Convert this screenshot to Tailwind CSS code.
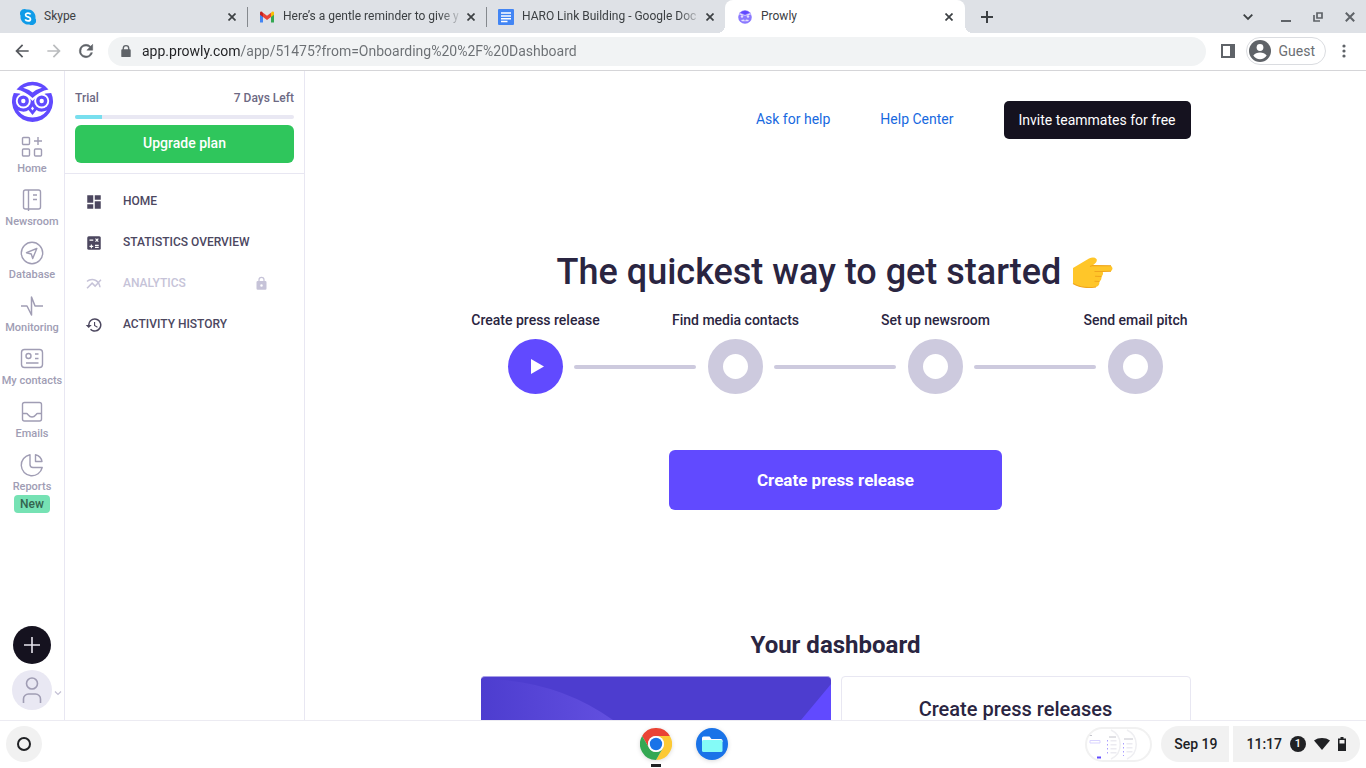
<!DOCTYPE html>
<html lang="en">
<head>
    <meta charset="UTF-8">
    <meta name="viewport" content="width=device-width, initial-scale=1.0">
    <title>Prowly</title>
    <script src="https://cdn.jsdelivr.net/npm/@tailwindcss/browser@4"></script>
</head>
<body class="h-screen flex flex-col overflow-hidden bg-white font-['Roboto',sans-serif] text-[#2a2541]">

    <!-- Tab strip -->
    <header class="shrink-0">
        <div class="flex h-[33px] items-stretch bg-[#dee1e6] pl-2 text-xs text-[#3c4043]">
            <div class="flex w-[239px] items-center gap-2 pl-3 pr-[7px]">
                <svg class="size-4 shrink-0" viewBox="0 0 16 16"><path d="M4.5 0A4.5 4.5 0 0 0 .6 6.8 7.5 7.5 0 0 0 9.2 15.4 4.5 4.5 0 0 0 15.4 9.2 7.5 7.5 0 0 0 6.8.6 4.5 4.5 0 0 0 4.5 0z" fill="#0f9be8"/><path d="M10.600 5.400C10 4.400 9.200 4.100 8 4.100 6.600 4.100 5.600 4.800 5.600 5.900 5.600 8.500 10.500 7.300 10.500 9.900 10.500 11.200 9.400 11.900 8 11.900 6.600 11.900 5.700 11.400 5.200 10.300" fill="none" stroke="#fff" stroke-width="1.700"/></svg>
                <button class="-mr-2 flex-1 whitespace-nowrap pb-[2px] text-left">Skype</button>
                <button class="grid size-4 place-items-center" aria-label="Close Skype"><svg class="size-2" viewBox="0 0 8 8"><path d="M.5.5l7 7m0-7l-7 7" stroke="currentColor" stroke-width="1.700"/></svg></button>
            </div>
            <div class="flex w-[239px] items-center gap-2 pl-3 pr-[7px] relative before:absolute before:left-0 before:h-5 before:w-px before:bg-[#85898e]">
                <svg class="size-4 shrink-0" viewBox="0 0 16 16"><path d="M1 4v9.500h3V7z" fill="#4285f4"/><path d="M12 7v6.500h3V4z" fill="#34a853"/><path d="M12 3.800V8l3-2.300V4c0-1.700-1.700-2.100-3-.2z" fill="#fbbc04"/><path d="M4 3.800l4 3 4-3V8l-4 3-4-3z" fill="#ea4335"/><path d="M1 4v1.700L4 8V3.800C2.700 1.900 1 2.300 1 4z" fill="#c5221f"/></svg>
                <button class="-mr-2 flex-1 whitespace-nowrap pb-[2px] text-left [mask-image:linear-gradient(to_right,#000_87%,transparent)]">Here’s a gentle reminder to give y</button>
                <button class="grid size-4 place-items-center" aria-label="Close Gmail"><svg class="size-2" viewBox="0 0 8 8"><path d="M.5.5l7 7m0-7l-7 7" stroke="currentColor" stroke-width="1.700"/></svg></button>
            </div>
            <div class="flex w-[239px] items-center gap-2 pl-3 pr-[7px] relative before:absolute before:left-0 before:h-5 before:w-px before:bg-[#85898e]">
                <svg class="size-4 shrink-0" viewBox="0 0 16 16"><rect width="16" height="16" rx="1" fill="#4285f4"/><path d="M3 4h10M3 7h10M3 9.800h10M3 12.500h6.500" stroke="#fff" stroke-width="1.500"/></svg>
                <button class="-mr-2 flex-1 whitespace-nowrap pb-[2px] text-left [mask-image:linear-gradient(to_right,#000_87%,transparent)]">HARO Link Building - Google Doc</button>
                <button class="grid size-4 place-items-center" aria-label="Close Google Docs"><svg class="size-2" viewBox="0 0 8 8"><path d="M.5.5l7 7m0-7l-7 7" stroke="currentColor" stroke-width="1.700"/></svg></button>
            </div>
            <div class="relative flex w-[240px] items-center gap-2 rounded-t-lg bg-white pl-3 pr-2 before:absolute before:-left-2 before:bottom-0 before:size-2 before:bg-[radial-gradient(circle_at_0_0,transparent_8px,#fff_8px)] after:absolute after:-right-2 after:bottom-0 after:size-2 after:bg-[radial-gradient(circle_at_100%_0,transparent_8px,#fff_8px)]">
                <svg class="size-4 shrink-0" viewBox="0 0 16 16"><circle cx="8" cy="8" r="6.800" fill="#8b79ff"/><path d="M3.500 3.500Q8 0 12.500 3.500L8 5.500z" fill="#614aff"/><g fill="#e4dfff"><circle cx="5" cy="7.500" r="1.200"/><circle cx="11" cy="7.500" r="1.200"/><path d="M4 11l3-.5 1 1.500 1-1.500 3 .5-1 1.200H5z"/><path d="M2 5.500l1-1.200 5 2 5-2 1 1.200-6 1.300z"/></g></svg>
                <button class="-mr-2 flex-1 whitespace-nowrap pb-[2px] text-left">Prowly</button>
                <button class="grid size-4 place-items-center" aria-label="Close Prowly"><svg class="size-2" viewBox="0 0 8 8"><path d="M.5.5l7 7m0-7l-7 7" stroke="currentColor" stroke-width="1.700"/></svg></button>
            </div>
            <button class="grid w-11 place-items-center" aria-label="New tab"><svg class="size-3" viewBox="0 0 12 12"><path d="M6 0v12M0 6h12" stroke="currentColor" stroke-width="2"/></svg></button>
            <div class="ml-auto flex items-center gap-4 pr-2 text-[#5f6368]">
                <button class="mr-[6px] grid size-4 place-items-center" aria-label="Search tabs"><svg class="size-[10px]" viewBox="0 0 10 10"><path d="M.7 2.700L5 7l4.300-4.300" fill="none" stroke="#3c4043" stroke-width="1.800"/></svg></button>
                <button class="grid size-4 place-items-center" aria-label="Minimize"><svg class="size-3" viewBox="0 0 12 12"><path d="M1 10h10" stroke="currentColor" stroke-width="2"/></svg></button>
                <button class="grid size-4 place-items-center" aria-label="Restore"><svg class="size-[10px]" viewBox="0 0 10 10"><path d="M4 1h5v5H4zM1 3v6h6" fill="none" stroke="currentColor" stroke-width="1.700"/></svg></button>
                <button class="grid size-4 place-items-center" aria-label="Close window"><svg class="size-[10px]" viewBox="0 0 10 10"><path d="M.8.8l8.400 8.400m0-8.400L.8 9.200" stroke="currentColor" stroke-width="2"/></svg></button>
            </div>
        </div>

        <!-- Toolbar -->
        <div class="flex h-[38px] items-center border-b border-[#d5d5d8] px-3 pb-px text-[#5f6368]">
            <button class="mr-3 grid size-5 place-items-center text-[#55585d]" aria-label="Back"><svg class="size-5" viewBox="0 0 24 24" fill="currentColor"><path d="M20 11H7.830l5.590-5.590L12 4l-8 8 8 8 1.410-1.410L7.830 13H20v-2z"/></svg></button>
            <button class="mr-3 grid size-5 place-items-center text-[#babcbe]" aria-label="Forward"><svg class="size-5" viewBox="0 0 24 24" fill="currentColor"><path d="M12 4l-1.410 1.410L16.170 11H4v2h12.170l-5.580 5.590L12 20l8-8z"/></svg></button>
            <button class="mr-3 grid size-5 place-items-center" aria-label="Reload"><svg class="size-5" viewBox="0 0 24 24" fill="currentColor"><path d="M17.650 6.350A7.960 7.960 0 0 0 12 4a8 8 0 1 0 7.730 10h-2.080A6 6 0 1 1 12 6c1.660 0 3.140.69 4.220 1.780L13 11h7V4l-2.350 2.350z" stroke="currentColor" stroke-width=".6"/></svg></button>
            <label class="flex h-[29px] flex-1 items-center gap-[10px] rounded-full bg-[#f1f3f4] pl-3 pr-4">
                <svg class="size-3" viewBox="0 0 12 14" fill="#5f6368"><path d="M2 5V4a4 4 0 0 1 8 0v1h.5a1 1 0 0 1 1 1v7a1 1 0 0 1-1 1h-9a1 1 0 0 1-1-1V6a1 1 0 0 1 1-1zm1.600 0h4.800V4a2.400 2.400 0 0 0-4.800 0z"/></svg>
                <input class="min-w-0 flex-1 bg-[linear-gradient(to_right,#202124_99px,#6b6f73_99px)] bg-clip-text text-sm text-transparent outline-none" aria-label="Address" value="app.prowly.com/app/51475?from=Onboarding%20%2F%20Dashboard">
            </label>
            <button class="ml-3 mr-2 grid size-5 place-items-center" aria-label="Side panel"><svg class="size-[14px]" viewBox="0 0 14 14"><path d="M1 1h12v12H1z" fill="none" stroke="currentColor" stroke-width="2"/><path d="M9 0h5v14H9z" fill="currentColor"/></svg></button>
            <button class="flex h-7 items-center gap-2 rounded-full border border-[#dadce0] pl-[2px] pr-[10px] text-sm text-[#6b6f73]">
                <svg class="size-[22px]" viewBox="0 0 22 22"><circle cx="11" cy="11" r="11" fill="#5f6368"/><circle cx="11" cy="7.500" r="3.400" fill="#fff"/><path d="M4.300 15.500c1.400-2 4-3.100 6.700-3.100s5.300 1.100 6.700 3.100a8 8 0 0 1-13.400 0z" fill="#fff"/></svg>
                Guest
            </button>
            <button class="ml-2 grid size-5 place-items-center" aria-label="Menu"><svg class="h-[14px] w-1" viewBox="0 0 4 14" fill="currentColor"><circle cx="2" cy="2" r="1.600"/><circle cx="2" cy="7" r="1.600"/><circle cx="2" cy="12" r="1.600"/></svg></button>
        </div>
    </header>

    <div class="flex min-h-0 flex-1">
        <!-- Icon rail -->
        <nav class="flex w-[65px] shrink-0 flex-col items-center border-r border-[#e8e7f2] pt-[10px] text-[11px]/4 font-medium text-[#a09db4]">
            <a href="#" aria-label="Prowly" class="mb-[13px]">
                <svg class="size-[41px]" viewBox="0 0 41 41">
                    <path d="M4.500 8.500A20.500 20.500 0 0 1 36.500 8.500C31 9.500 25 12.500 20.500 17C16 12.500 10 9.500 4.500 8.500z" fill="#614aff"/>
                    <path d="M11 6.800Q20.500 1.800 30 6.800Q24 8.500 20.500 11.500Q17 8.500 11 6.800z" fill="#fff"/>
                    <path d="M1.800 12A20.500 20.500 0 1 0 39.200 12Q28 12 20.500 20Q13 12 1.800 12z" fill="#614aff"/>
                    <circle cx="11.300" cy="20" r="7.500" fill="#fff"/><circle cx="29.700" cy="20" r="7.500" fill="#fff"/>
                    <circle cx="11.300" cy="20" r="5.600" fill="#614aff"/><circle cx="29.700" cy="20" r="5.600" fill="#614aff"/>
                    <circle cx="11.300" cy="20" r="2.200" fill="#fff"/><circle cx="29.700" cy="20" r="2.200" fill="#fff"/>
                    <path d="M6 29.500Q13 32 16.500 29L20.500 34L24.500 29Q28 32 35 29.500Q29.500 36.500 20.500 36.500Q11.500 36.500 6 29.500z" fill="#fff"/>
                    <path d="M20.500 25.500l1.500 2-1.500 2-1.500-2z" fill="#fff"/>
                </svg>
            </a>
            <a href="#" class="flex h-[53px] flex-col items-center gap-[2px]">
                <svg class="size-6" viewBox="0 0 24 24" fill="none" stroke="currentColor" stroke-width="1.400"><rect x="2.500" y="2.500" width="7" height="7" rx="1"/><rect x="2.500" y="14" width="7" height="7" rx="1"/><rect x="14.500" y="14" width="7" height="7" rx="1"/><path d="M18 2v8M14 6h8"/></svg>
                Home
            </a>
            <a href="#" class="flex h-[53px] flex-col items-center gap-[2px]">
                <svg class="size-6" viewBox="0 0 24 24" fill="none" stroke="currentColor" stroke-width="1.400"><rect x="3.500" y="2" width="17" height="19" rx="2"/><path d="M8.500 2v21M13 7h4M13 11.500h4"/></svg>
                Newsroom
            </a>
            <a href="#" class="flex h-[53px] flex-col items-center gap-[2px]">
                <svg class="size-6" viewBox="0 0 24 24" fill="none" stroke="currentColor" stroke-width="1.400" stroke-linejoin="round"><circle cx="12" cy="12" r="10.700"/><path d="M16.800 7.500L6.500 11.700l4.800 1.300 1.400 4.500z"/></svg>
                Database
            </a>
            <a href="#" class="flex h-[53px] flex-col items-center gap-[2px]">
                <svg class="size-6" viewBox="0 0 24 24" fill="none" stroke="currentColor" stroke-width="1.500" stroke-linejoin="round"><path d="M1 12h6l4.500 9V3l3.500 9h8"/></svg>
                Monitoring
            </a>
            <a href="#" class="flex h-[53px] flex-col items-center gap-[2px] whitespace-nowrap">
                <svg class="size-6" viewBox="0 0 24 24" fill="none" stroke="currentColor" stroke-width="1.400"><rect x="1.500" y="2.500" width="21" height="18" rx="3"/><circle cx="8.500" cy="9" r="2.500"/><path d="M15 7h3.500M15 11.500h3.500M6 16h12.500"/></svg>
                My contacts
            </a>
            <a href="#" class="flex h-[53px] flex-col items-center gap-[2px]">
                <svg class="size-6" viewBox="0 0 24 24" fill="none" stroke="currentColor" stroke-width="1.400"><rect x="2.500" y="2.500" width="19" height="18.500" rx="2"/><path d="M2.500 13.500h4c1.500 0 2 3.500 5.500 3.500s4-3.500 5.500-3.500h4"/></svg>
                Emails
            </a>
            <a href="#" class="flex flex-col items-center gap-[2px]">
                <svg class="size-6" viewBox="0 0 24 24" fill="none" stroke="currentColor" stroke-width="1.400" stroke-linejoin="round"><path d="M10 1.700A10.600 10.600 0 1 0 22.200 14.500H13a3 3 0 0 1-3-3z"/><path d="M15.500 1.700v6.800H22A8.500 8.500 0 0 0 15.500 1.700z"/></svg>
                Reports
            </a>
            <span class="rounded bg-[#76e2b4] px-[6px] py-px text-xs text-[#34644f]">New</span>
            <button class="mt-auto grid size-[38px] place-items-center rounded-full bg-[#15121f]" aria-label="Create"><svg class="size-4" viewBox="0 0 16 16"><path d="M8 0v16M0 8h16" stroke="#e6e5ee" stroke-width="1.600"/></svg></button>
            <button class="mb-[10px] mt-[6px] flex items-center gap-[2px] self-start pl-3" aria-label="Account">
                <span class="grid size-10 place-items-center rounded-full bg-[#e9e8f3]"><svg class="h-[26px] w-5" viewBox="0 0 20 26" fill="none" stroke="currentColor" stroke-width="1.600"><circle cx="10" cy="6.500" r="5.500"/><path d="M1.500 26v-4a5 5 0 0 1 5-5h7a5 5 0 0 1 5 5v4"/></svg></span>
                <svg class="mt-[6px] size-2" viewBox="0 0 8 8"><path d="M1 2.500l3 3 3-3" fill="none" stroke="#c3c0d4" stroke-width="1.200"/></svg>
            </button>
        </nav>

        <!-- Side menu -->
        <aside class="w-60 shrink-0 border-r border-[#e8e7f2]">
            <div class="border-b border-[#e8e7f2] px-[10px] pb-[10px] pt-[19px]">
                <div class="flex justify-between text-xs font-medium text-[#6d6983]"><span>Trial</span><span>7 Days Left</span></div>
                <div class="mb-[6px] mt-[9px] h-1 overflow-hidden rounded-full bg-[#e9e8f3]" role="progressbar" aria-label="Trial" aria-valuenow="12">
                    <div class="h-1 bg-[#78dfee]" style="width: 12.5%"></div>
                </div>
                <button class="h-[38px] w-full rounded-md bg-[#2fc65c] pb-[2px] text-sm font-medium text-white">Upgrade plan</button>
            </div>
            <nav class="pt-[6px] text-xs font-medium text-[#4c475f]">
                <a href="#" class="flex h-[41px] items-center gap-5 pl-5"><svg class="mt-[2px] size-[18px]" viewBox="0 0 24 24" fill="currentColor"><path d="M3 13h8V3H3v10zm0 8h8v-6H3v6zm10 0h8V11h-8v10zm0-18v6h8V3h-8z"/></svg>HOME</a>
                <a href="#" class="flex h-[41px] items-center gap-5 pl-5"><svg class="mt-[2px] size-[18px]" viewBox="0 0 24 24"><rect x="3" y="3" width="18" height="18" rx="2" fill="currentColor"/><path d="M6 8.200h5M13.300 15.200h5M13.300 17.800h5M8.500 14v5M6 16.500h5M14 6.300l3.800 3.800m0-3.800L14 10.100" stroke="#fff" stroke-width="1.500"/></svg>STATISTICS OVERVIEW</a>
                <a href="#" class="flex h-[41px] items-center gap-5 pl-5 pr-[35px] text-[#c6c3d8]"><svg class="mt-[2px] size-[18px]" viewBox="0 0 24 24" fill="currentColor"><path d="M22 6.920l-1.410-1.410-2.850 3.210C15.680 6.400 12.830 5 9.610 5 6.720 5 4.070 6.160 2 8l1.420 1.420C5.120 7.930 7.270 7 9.610 7c2.740 0 5.090 1.260 6.770 3.240l-2.880 3.240-4-4L2 16.990l1.500 1.500 6-6.010 4 4 4.050-4.550c.75 1.350 1.250 2.900 1.440 4.550H21c-.22-2.300-.95-4.390-2.040-6.140L22 6.920z"/></svg>ANALYTICS
                    <svg class="ml-auto mt-[2px] size-[15px]" viewBox="0 0 24 24" fill="currentColor"><path d="M18 8h-1V6A5 5 0 0 0 7 6v2H6a2 2 0 0 0-2 2v10a2 2 0 0 0 2 2h12a2 2 0 0 0 2-2V10a2 2 0 0 0-2-2zm-6 9a2 2 0 1 1 0-4 2 2 0 0 1 0 4zm3-9H9V6a3 3 0 0 1 6 0v2z"/></svg></a>
                <a href="#" class="flex h-[41px] items-center gap-5 pl-5"><svg class="mt-[2px] size-[18px]" viewBox="0 0 24 24" fill="currentColor"><path d="M13 3a9 9 0 0 0-9 9H1l3.890 3.890.07.14L9 12H6a7 7 0 1 1 2.060 4.940l-1.420 1.420A9 9 0 1 0 13 3zm-1 5v5l4.280 2.540.72-1.210-3.500-2.080V8H12z"/></svg>ACTIVITY HISTORY</a>
            </nav>
        </aside>

        <!-- Dashboard -->
        <main class="min-w-0 flex-1 overflow-hidden pt-[30px]">
            <div class="mx-auto flex max-w-[710px] items-center justify-end gap-[50px] text-sm text-[#1769e0]">
                <a href="#" class="pb-[2px]">Ask for help</a>
                <a href="#" class="pb-[2px]">Help Center</a>
                <button class="h-[38px] w-[187px] rounded-[5px] bg-[#15121f] text-white">Invite teammates for free</button>
            </div>

            <section class="mt-[110px] flex flex-col items-center">
                <h1 class="flex items-center gap-[11px] text-4xl/[46px] font-medium">The quickest way to get started
                    <svg class="h-[31px] w-[42px]" viewBox="0 0 42 31" role="img" aria-label="pointing right"><path d="M1 11L17 1.500Q22-.5 24.500 2 26 4.500 20.500 8.500L39 8.700Q42 11.500 39 14.200L30.500 14.500Q32 17.500 29.500 19.500 30 23 27.500 24.500 27.500 29 24 30 10 32 1 26.500z" fill="#ffc629"/><path d="M18 9.500l2.500-1 18.500.2M39 14.200L30.500 14.500 22.500 14.500M29.500 19.500L23 19.200M27.500 24.500l-5-.2M24 30Q10 32 1 26.500" fill="none" stroke="#f0a51c" stroke-width="1.100"/></svg>
                </h1>
                <div class="mt-[15px] grid w-full max-w-[800px] grid-cols-4 text-center text-sm font-medium">
                    <span>Create press release</span><span>Find media contacts</span><span>Set up newsroom</span><span>Send email pitch</span>
                </div>
                <div class="mt-[9px] flex items-center gap-[11px]">
                    <button class="grid size-[55px] place-items-center rounded-full bg-[#614aff]" aria-label="Create press release"><svg class="ml-1 h-[15px] w-[13px]" viewBox="0 0 13 15"><path d="M0 0l13 7.500L0 15z" fill="#fff"/></svg></button>
                    <span class="mr-px h-1 w-[122px] rounded-full bg-[#cdcade]"></span>
                    <span class="size-[55px] rounded-full border-[15px] border-[#cdcade]"></span>
                    <span class="mr-px h-1 w-[122px] rounded-full bg-[#cdcade]"></span>
                    <span class="size-[55px] rounded-full border-[15px] border-[#cdcade]"></span>
                    <span class="mr-px h-1 w-[122px] rounded-full bg-[#cdcade]"></span>
                    <span class="size-[55px] rounded-full border-[15px] border-[#cdcade]"></span>
                </div>
                <button class="mt-14 h-[60px] w-[333px] rounded-md bg-[#614aff] pt-[2px] text-[17px] font-bold text-white">Create press release</button>
            </section>

            <section class="mt-[119px] flex flex-col items-center">
                <h2 class="text-2xl font-bold">Your dashboard</h2>
                <div class="mt-[15px] grid w-full max-w-[710px] grid-cols-2 gap-[10px]">
                    <div class="h-[360px] overflow-hidden rounded-sm border-t border-[#a79ee7] bg-[#4d3dcf]">
                        <svg class="h-[360px] w-full" viewBox="0 0 350 360" preserveAspectRatio="none">
                            <defs><linearGradient id="arc" x2="1"><stop offset="0" stop-color="#4d3dcf"/><stop offset=".6" stop-color="#6350e0"/></linearGradient></defs>
                            <path d="M0 2Q75 2 132 43L230 200V360H0z" fill="url(#arc)"/>
                            <path d="M350 7L320 43V360H350z" fill="#614aff"/>
                        </svg>
                    </div>
                    <article class="h-[360px] rounded-sm border border-[#e8e7f2] pt-[18px] text-center">
                        <h3 class="text-xl font-medium">Create press releases</h3>
                    </article>
                </div>
            </section>
        </main>
    </div>

    <!-- Shelf -->
    <footer class="grid h-12 shrink-0 grid-cols-[1fr_auto_1fr] items-center border-t border-[#ecebf2] bg-white px-[6px] text-sm font-medium text-[#202124]">
        <button class="mb-px grid size-9 place-items-center rounded-full bg-[#f1f1f1]" aria-label="Launcher"><span class="size-[14px] rounded-full border-2 border-[#202124]"></span></button>
        <div class="flex h-full gap-6 pl-[2px]">
            <button class="flex flex-col items-center pt-[7px]" aria-label="Chrome">
                <svg class="size-8 drop-shadow-sm" viewBox="0 0 32 32"><path d="M16 8H29.860A16 16 0 0 0 2.140 8L9.070 20A8 8 0 0 1 16 8z" fill="#ea4335"/><path d="M29.860 8A16 16 0 0 1 16 32L22.930 20A8 8 0 0 0 16 8z" fill="#fcc934"/><path d="M16 32A16 16 0 0 1 2.140 8L9.070 20A8 8 0 0 0 22.930 20z" fill="#34a853"/><circle cx="16" cy="16" r="8" fill="#fff"/><circle cx="16" cy="16" r="6.200" fill="#1a73e8"/></svg>
                <span class="mt-1 h-[3px] w-[10px] bg-[#202124]"></span>
            </button>
            <button class="flex flex-col items-center pt-[7px]" aria-label="Files">
                <svg class="size-8 drop-shadow-sm" viewBox="0 0 32 32"><circle cx="16" cy="16" r="16" fill="#1a73e8"/><path d="M6 10a1.500 1.500 0 0 1 1.500-1.500h6l2 2.500H25a1.500 1.500 0 0 1 1.500 1.500V14H6z" fill="#fff"/><rect x="6" y="12" width="20.500" height="12" rx="1.500" fill="#84fbf7"/></svg>
            </button>
        </div>
        <div class="mb-px flex items-center justify-end gap-1">
            <button class="mr-[5px] h-[35px] w-[67px] overflow-hidden rounded-full border-2 border-[#f1f1f1]" aria-label="Recent screenshots">
                <svg class="h-full w-full" viewBox="0 0 63 31" fill="none"><g stroke="#efeff2" stroke-width="1.500"><path d="M24 1a16 16 0 0 1 0 29M40 1a16 16 0 0 1 0 29"/></g><path d="M3 11.500h10v2.500H3z" stroke="#d9d3ff"/><path d="M10 27.500h4v2h-4z" fill="#614aff"/><path d="M2 6.500h3M22 8h7M37 10h9" stroke="#c4c4cc"/><path d="M20.500 11v16M36.500 14v13" stroke="#a99dff" stroke-dasharray="1.500 2.500"/><path d="M25 11v16M28 11v15M41 14v12M44 14v12" stroke="#ecebf1" stroke-width="3" stroke-dasharray="1.500 2.500"/></svg>
            </button>
            <button class="h-9 rounded-l-full rounded-r bg-[#f1f1f1] pl-[13px] pr-3">Sep 19</button>
            <button class="flex h-9 items-center gap-2 rounded-l rounded-r-full bg-[#f1f1f1] pl-[13px] pr-[14px]">
                11:17
                <span class="grid size-4 place-items-center rounded-full bg-[#202124] text-[11px] text-white">1</span>
                <svg class="h-3 w-4" viewBox="0 0 16 12" fill="#202124"><path d="M8 12L0 2.500C4.500-.8 11.500-.8 16 2.500z"/></svg>
                <svg class="h-[14px] w-2" viewBox="0 0 8 14"><path d="M2.500 0h3v1.500H8V14H0V1.500h2.500z" fill="#202124"/><path d="M1.500 3h5v3.500h-5z" fill="#f1f1f1"/></svg>
            </button>
        </div>
    </footer>
</body>
</html>
